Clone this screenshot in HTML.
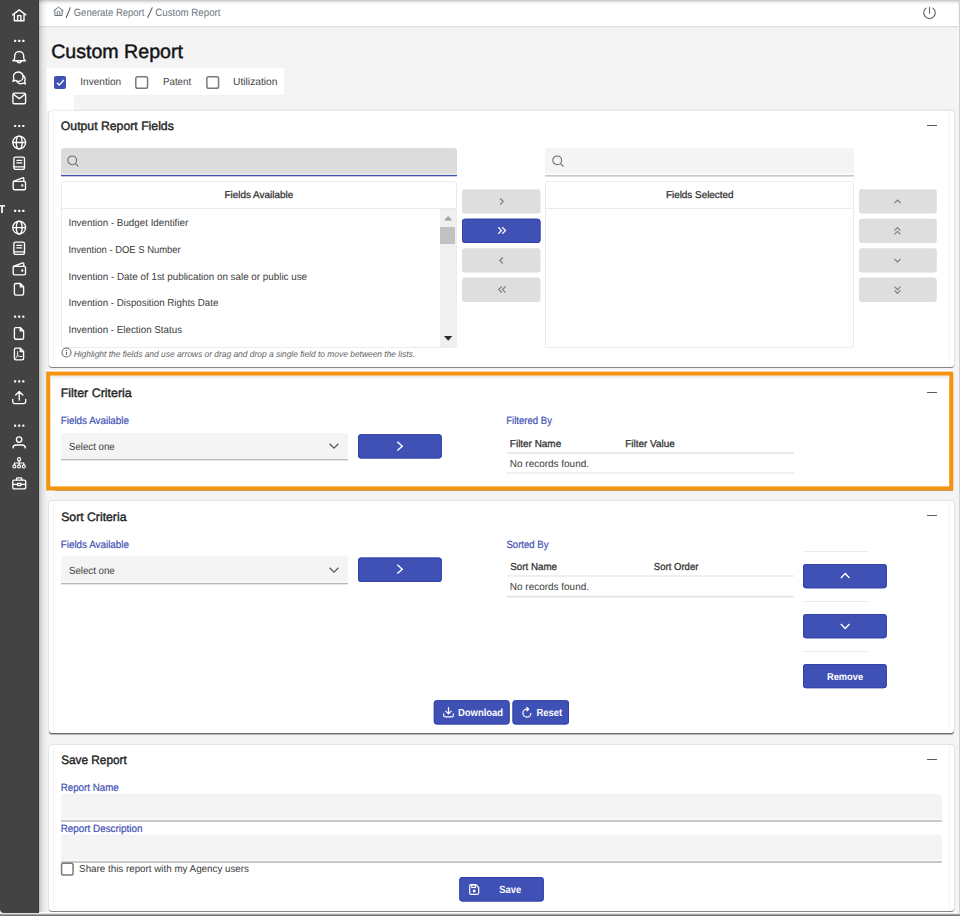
<!DOCTYPE html>
<html><head><meta charset="utf-8"><title>Custom Report</title>
<style>
*{box-sizing:border-box}
html,body{margin:0;padding:0}
body{width:960px;height:916px;overflow:hidden;position:relative;background:#f4f4f4;font-family:"Liberation Sans",sans-serif;}
.a{position:absolute}
.t{position:absolute;white-space:pre;line-height:1;transform-origin:0 0;text-rendering:geometricPrecision;font-family:"Liberation Sans",sans-serif;}
.panel{position:absolute;background:#fff;border-radius:3px;box-shadow:0 1px 0.5px rgba(0,0,0,.42),0 0 2px rgba(0,0,0,.24);}
.vl{position:absolute;width:1px;background:#f5f5f5}
.btn{position:absolute;border-radius:3px;background:#3f51b5;box-shadow:0 1px 1.5px rgba(0,0,0,.25)}
.btn.dis{background:#dedede;box-shadow:none}
.inp{position:absolute;background:#f4f4f4;border-radius:3px 3px 0 0;border-bottom:1px solid #9a9a9a}
.hl{position:absolute;height:1px;background:#e4e4e4}
.cb{position:absolute;width:13px;height:13px;border:1.5px solid #757575;border-radius:2px;background:#fff}
svg{position:absolute;overflow:visible}
.si{fill:none;stroke:#fff;stroke-width:1.35;stroke-linecap:round;stroke-linejoin:round}
.minus{position:absolute;height:1.15px;width:10px;background:#5c5c5c}

</style></head><body>
<!-- topbar -->
<div class="a" style="left:39px;top:0;width:919px;height:26.5px;background:#fff;border-bottom:1px solid #dedede"></div>
<div class="a" style="left:39px;top:27px;width:919px;height:2px;background:linear-gradient(#ebebeb,#f4f4f4)"></div>

<!-- checkbox strip -->
<div class="a" style="left:46.6px;top:68px;width:237.2px;height:26.8px;background:#fff"></div>
<div class="a" style="left:46.6px;top:94px;width:27.2px;height:17px;background:#fff"></div>
<div class="a" style="left:73.8px;top:94.8px;width:210px;height:1.7px;background:#f1f1f1"></div>
<div class="a" style="left:53.6px;top:76.1px;width:12.6px;height:12.6px;border-radius:2px;background:#3f51b5"></div>
<svg style="left:53.6px;top:76.1px" width="12.6" height="12.6" viewBox="0 0 12.6 12.6"><path d="M2.9 6.7 L5.2 9 L9.9 4" fill="none" stroke="#fff" stroke-width="1.3"/></svg>
<svg style="left:0;top:0" width="960" height="916"><rect x="135.8" y="76.8" width="11.75" height="11.50" rx="1.8" fill="#fff" stroke="#7a7a7a" stroke-width="1.5"/></svg>
<svg style="left:0;top:0" width="960" height="916"><rect x="206.85" y="76.8" width="11.70" height="11.50" rx="1.8" fill="#fff" stroke="#7a7a7a" stroke-width="1.5"/></svg>

<!-- PANEL 1 -->
<div class="panel" style="left:49px;top:111px;width:905px;height:255.5px"></div>
<div class="vl" style="left:53px;top:112px;height:253px"></div>
<div class="vl" style="left:949px;top:112px;height:253px"></div>
<div class="minus" style="left:927px;top:124.8px"></div>
<!-- search 1 -->
<div class="a" style="left:61px;top:148px;width:396px;height:28px;border-radius:3px 3px 0 0;background:linear-gradient(#dcdcdc 0,#dcdcdc 24.8px,#e6e6e2 24.8px,#e6e6e2 26.7px,#3f51b5 26.7px,#3f51b5 28px)"></div><div class="a" style="left:61px;top:176px;width:396px;height:1px;background:rgba(63,81,181,.3)"></div>
<svg style="left:67.1px;top:155.2px" width="12" height="12" viewBox="0 0 12 12"><circle cx="5.2" cy="5.3" r="4.4" fill="none" stroke="#6a6a6a" stroke-width="1.05"/><path d="M8.4 8.6 L11.1 11.2" stroke="#6a6a6a" stroke-width="1.15" stroke-linecap="round"/></svg>
<!-- list 1 -->
<div class="a" style="left:61px;top:181px;width:396px;height:167.4px;background:#fff;border:1px solid #ececec;border-radius:3px"></div>
<div class="hl" style="left:62px;top:208px;width:394px;background:#ebebeb"></div>
<!-- scrollbar -->
<div class="a" style="left:439.6px;top:209px;width:16.6px;height:138.4px;background:#f0f0f0;border-radius:0 0 2px 0"></div>
<div class="a" style="left:440.2px;top:226.8px;width:14.7px;height:17px;background:#c1c1c1"></div>
<svg style="left:443.6px;top:215.7px" width="8.4" height="4.6" viewBox="0 0 8.4 4.6"><path d="M0 4.6 L4.2 0 L8.4 4.6 Z" fill="#a0a0a0"/></svg>
<svg style="left:443.5px;top:336.2px" width="8.4" height="5" viewBox="0 0 8.4 5"><path d="M0 0 L4.2 4.8 L8.4 0 Z" fill="#2e2e2e"/></svg>
<!-- info icon -->
<svg style="left:60.5px;top:347.2px" width="11" height="11" viewBox="0 0 11 11"><circle cx="5.5" cy="5.5" r="4.55" fill="none" stroke="#6a6a6a" stroke-width="1.05"/><path d="M5.5 5 V7.9" stroke="#6a6a6a" stroke-width="1.1"/><circle cx="5.5" cy="3.4" r="0.65" fill="#6a6a6a"/></svg>
<!-- transfer buttons -->
<svg style="left:0;top:0" width="960" height="916"><rect x="462.0" y="189.2" width="78.5" height="24.3" rx="3" fill="#dedede"/></svg>
<svg style="left:0;top:0" width="960" height="916"><rect x="462.0" y="218.7" width="78.5" height="24.3" rx="3" fill="#3f51b5"/><rect x="462.5" y="219.2" width="77.5" height="23.3" rx="2.5" fill="none" stroke="#3342ab" stroke-width="1"/></svg>
<svg style="left:0;top:0" width="960" height="916"><rect x="462.0" y="248.2" width="78.5" height="24.3" rx="3" fill="#dedede"/></svg>
<svg style="left:0;top:0" width="960" height="916"><rect x="462.0" y="277.6" width="78.5" height="24.3" rx="3" fill="#dedede"/></svg>
<svg style="left:497px;top:197px" width="9" height="9" viewBox="0 0 9 9"><path d="M3.2 1.5 L6.2 4.5 L3.2 7.5" fill="none" stroke="#7f7f7f" stroke-width="1.2"/></svg>
<svg style="left:496.5px;top:226.3px" width="10" height="9" viewBox="0 0 10 9"><path d="M1.3 1.3 L4.5 4.5 L1.3 7.7 M5.3 1.3 L8.5 4.5 L5.3 7.7" fill="none" stroke="#fff" stroke-width="1.25"/></svg>
<svg style="left:497px;top:255.8px" width="9" height="9" viewBox="0 0 9 9"><path d="M5.8 1.5 L2.8 4.5 L5.8 7.5" fill="none" stroke="#7f7f7f" stroke-width="1.2"/></svg>
<svg style="left:496.5px;top:285.3px" width="10" height="9" viewBox="0 0 10 9"><path d="M4.7 1.5 L1.7 4.5 L4.7 7.5 M8.5 1.5 L5.5 4.5 L8.5 7.5" fill="none" stroke="#7f7f7f" stroke-width="1.2"/></svg>
<!-- search 2 -->
<div class="a" style="left:545px;top:148px;width:309px;height:29px;border-radius:3px 3px 0 0;background:linear-gradient(#f4f4f4 0,#f4f4f4 25.2px,#fbfbfb 25.2px,#fbfbfb 27px,#c8c8c8 27px,#c8c8c8 28px,#dedede 28px,#dedede 29px)"></div>
<svg style="left:552.2px;top:155.2px" width="12" height="12" viewBox="0 0 12 12"><circle cx="5.2" cy="5.3" r="4.4" fill="none" stroke="#6a6a6a" stroke-width="1.05"/><path d="M8.4 8.6 L11.1 11.2" stroke="#6a6a6a" stroke-width="1.15" stroke-linecap="round"/></svg>
<!-- list 2 -->
<div class="a" style="left:545px;top:181px;width:309px;height:167.4px;background:#fff;border:1px solid #ececec;border-radius:3px"></div>
<div class="hl" style="left:546px;top:208px;width:307px;background:#ebebeb"></div>
<!-- order buttons -->
<svg style="left:0;top:0" width="960" height="916"><rect x="859.0" y="189.2" width="77.8" height="24.3" rx="3" fill="#dedede"/></svg>
<svg style="left:0;top:0" width="960" height="916"><rect x="859.0" y="218.7" width="77.8" height="24.3" rx="3" fill="#dedede"/></svg>
<svg style="left:0;top:0" width="960" height="916"><rect x="859.0" y="248.2" width="77.8" height="24.3" rx="3" fill="#dedede"/></svg>
<svg style="left:0;top:0" width="960" height="916"><rect x="859.0" y="277.6" width="77.8" height="24.3" rx="3" fill="#dedede"/></svg>
<svg style="left:893.4px;top:197px" width="9" height="9" viewBox="0 0 9 9"><path d="M1.5 6 L4.5 3 L7.5 6" fill="none" stroke="#7f7f7f" stroke-width="1.2"/></svg>
<svg style="left:893.4px;top:226px" width="9" height="10" viewBox="0 0 9 10"><path d="M1.5 4.6 L4.5 1.6 L7.5 4.6 M1.5 8.4 L4.5 5.4 L7.5 8.4" fill="none" stroke="#7f7f7f" stroke-width="1.2"/></svg>
<svg style="left:893.4px;top:255.8px" width="9" height="9" viewBox="0 0 9 9"><path d="M1.5 3 L4.5 6 L7.5 3" fill="none" stroke="#7f7f7f" stroke-width="1.2"/></svg>
<svg style="left:893.4px;top:284.8px" width="9" height="10" viewBox="0 0 9 10"><path d="M1.5 1.6 L4.5 4.6 L7.5 1.6 M1.5 5.4 L4.5 8.4 L7.5 5.4" fill="none" stroke="#7f7f7f" stroke-width="1.2"/></svg>

<!-- PANEL 2 (highlighted) -->
<div class="a" style="left:55px;top:489.6px;width:898px;height:1.9px;background:rgba(90,105,130,.55)"></div>
<div class="a" style="left:46px;top:369.8px;width:907.5px;height:2px;background:#fbfefe"></div>
<svg style="left:0;top:360px" width="960" height="140" viewBox="0 360 960 140"><rect x="48.25" y="373.65" width="903" height="114.8" fill="#fff" stroke="#f5920e" stroke-width="4.1"/><rect x="50.3" y="375.7" width="898.9" height="2.7" fill="#ededf1"/></svg>
<div class="minus" style="left:927px;top:391.8px"></div>
<div class="a" style="left:61px;top:433px;width:287px;height:28px;border-radius:3px 3px 0 0;background:linear-gradient(#f4f4f4 0,#f4f4f4 25.3px,#fafafa 25.3px,#fafafa 26px,#b6b6b6 26px,#b6b6b6 27px,#e6e6e6 27px,#e6e6e6 28px)"></div>
<svg style="left:329px;top:443.3px" width="10" height="6.5" viewBox="0 0 10 6.5"><path d="M0.6 0.8 L5 5.1 L9.4 0.8" fill="none" stroke="#555" stroke-width="1.2"/></svg>
<svg style="left:0;top:0" width="960" height="916"><rect x="358.0" y="434.2" width="83.8" height="24.3" rx="3" fill="#3f51b5"/><rect x="358.5" y="434.7" width="82.8" height="23.3" rx="2.5" fill="none" stroke="#3342ab" stroke-width="1"/></svg>
<svg style="left:396.1px;top:441px" width="8" height="10.4" viewBox="0 0 8 10.4"><path d="M1.3 0.8 L6.3 5.2 L1.3 9.6" fill="none" stroke="#fff" stroke-width="1.4"/></svg>
<div class="hl" style="left:506.8px;top:452px;width:287px;height:2px;background:#e9e9e9"></div>
<div class="hl" style="left:506.8px;top:472px;width:287px;height:2px;background:#efefef"></div>

<!-- PANEL 3 -->
<div class="panel" style="left:49px;top:501.2px;width:905px;height:232.3px;box-shadow:0 1px 0 rgba(0,0,0,.38),0 2px 0.5px rgba(0,0,0,.24),0 0 2px rgba(0,0,0,.24)"></div>
<div class="vl" style="left:53px;top:502px;height:230px"></div>
<div class="vl" style="left:949px;top:502px;height:230px"></div>
<div class="minus" style="left:927px;top:515.2px"></div>
<div class="a" style="left:61px;top:556px;width:287px;height:29px;border-radius:3px 3px 0 0;background:linear-gradient(#f4f4f4 0,#f4f4f4 25.3px,#f9f9f9 25.3px,#f9f9f9 27px,#b6b6b6 27px,#b6b6b6 28px,#e6e6e6 28px,#e6e6e6 29px)"></div>
<svg style="left:329px;top:566.9px" width="10" height="6.5" viewBox="0 0 10 6.5"><path d="M0.6 0.8 L5 5.1 L9.4 0.8" fill="none" stroke="#555" stroke-width="1.2"/></svg>
<svg style="left:0;top:0" width="960" height="916"><rect x="358.0" y="557.6" width="83.8" height="24.3" rx="3" fill="#3f51b5"/><rect x="358.5" y="558.1" width="82.8" height="23.3" rx="2.5" fill="none" stroke="#3342ab" stroke-width="1"/></svg>
<svg style="left:396.1px;top:564.4px" width="8" height="10.4" viewBox="0 0 8 10.4"><path d="M1.3 0.8 L6.3 5.2 L1.3 9.6" fill="none" stroke="#fff" stroke-width="1.4"/></svg>
<div class="hl" style="left:506.8px;top:575px;width:287px;height:2px;background:#efefef"></div>
<div class="hl" style="left:506.8px;top:595px;width:287px;height:3px;background:linear-gradient(#f6f6f6 0,#f6f6f6 1px,#e6e6e6 1px,#e6e6e6 2px,#f0f0f0 2px)"></div>
<div class="hl" style="left:803px;top:550.6px;width:64.5px;background:#ececec"></div>
<div class="hl" style="left:803px;top:600.8px;width:64.5px;background:#ececec"></div>
<div class="hl" style="left:803px;top:650.8px;width:64.5px;background:#ececec"></div>
<svg style="left:0;top:0" width="960" height="916"><rect x="803.0" y="564.0" width="83.8" height="24.3" rx="3" fill="#3f51b5"/><rect x="803.5" y="564.5" width="82.8" height="23.3" rx="2.5" fill="none" stroke="#3342ab" stroke-width="1"/></svg>
<svg style="left:0;top:0" width="960" height="916"><rect x="803.0" y="614.0" width="83.8" height="24.3" rx="3" fill="#3f51b5"/><rect x="803.5" y="614.5" width="82.8" height="23.3" rx="2.5" fill="none" stroke="#3342ab" stroke-width="1"/></svg>
<svg style="left:0;top:0" width="960" height="916"><rect x="803.0" y="664.0" width="83.8" height="24.2" rx="3" fill="#3f51b5"/><rect x="803.5" y="664.5" width="82.8" height="23.2" rx="2.5" fill="none" stroke="#3342ab" stroke-width="1"/></svg>
<svg style="left:839.8px;top:572.4px" width="10.4" height="7" viewBox="0 0 10.4 7"><path d="M0.9 6 L5.2 1.4 L9.5 6" fill="none" stroke="#fff" stroke-width="1.4"/></svg>
<svg style="left:839.8px;top:622.6px" width="10.4" height="7" viewBox="0 0 10.4 7"><path d="M0.9 1 L5.2 5.6 L9.5 1" fill="none" stroke="#fff" stroke-width="1.4"/></svg>
<svg style="left:0;top:0" width="960" height="916"><rect x="433.8" y="700.2" width="75.8" height="24.3" rx="3" fill="#3f51b5"/><rect x="434.3" y="700.7" width="74.8" height="23.3" rx="2.5" fill="none" stroke="#3342ab" stroke-width="1"/></svg>
<svg style="left:0;top:0" width="960" height="916"><rect x="512.5" y="700.2" width="56.5" height="24.3" rx="3" fill="#3f51b5"/><rect x="513.0" y="700.7" width="55.5" height="23.3" rx="2.5" fill="none" stroke="#3342ab" stroke-width="1"/></svg>
<svg style="left:443px;top:707px" width="11" height="10.6" viewBox="0 0 11 10.6"><path d="M5.5 0.6 V6.6 M2.8 4.2 L5.5 6.9 L8.2 4.2 M0.7 6.8 V8.4 Q0.7 9.9 2.2 9.9 H8.8 Q10.3 9.9 10.3 8.4 V6.8" fill="none" stroke="#fff" stroke-width="1.2" stroke-linecap="round" stroke-linejoin="round"/></svg>
<svg style="left:522px;top:707px" width="10" height="10.6" viewBox="0 0 10 10.6"><path d="M8.9 6.3 A4 4 0 1 1 5 2.2 H6.5 M4.9 0.5 L6.7 2.2 L4.9 3.9" fill="none" stroke="#fff" stroke-width="1.2" stroke-linecap="round" stroke-linejoin="round"/></svg>

<!-- PANEL 4 -->
<div class="panel" style="left:49px;top:745px;width:905px;height:166.3px"></div>
<div class="vl" style="left:53px;top:746px;height:164px"></div>
<div class="vl" style="left:949px;top:746px;height:164px"></div>
<div class="minus" style="left:927px;top:758.6px"></div>
<div class="a" style="left:61px;top:794px;width:880.5px;height:28px;border-radius:3px 3px 0 0;background:linear-gradient(#fafafa 0,#fafafa .5px,#f4f4f4 .5px,#f4f4f4 24.8px,#fcfcfc 24.8px,#fcfcfc 26px,#c8c8c8 26px,#c8c8c8 28px)"></div>
<div class="a" style="left:61px;top:834px;width:880.5px;height:29px;border-radius:3px 3px 0 0;background:linear-gradient(#fafafa 0,#fafafa .6px,#f4f4f4 .6px,#f4f4f4 25.8px,#fcfcfc 25.8px,#fcfcfc 27px,#c8c8c8 27px,#c8c8c8 29px)"></div>
<svg style="left:0;top:0" width="960" height="916"><rect x="61.55" y="863.15" width="11.50" height="11.90" rx="1.8" fill="#fff" stroke="#7a7a7a" stroke-width="1.5"/></svg>
<svg style="left:0;top:0" width="960" height="916"><rect x="459.3" y="877.0" width="84.5" height="24.5" rx="3" fill="#3f51b5"/><rect x="459.8" y="877.5" width="83.5" height="23.5" rx="2.5" fill="none" stroke="#3342ab" stroke-width="1"/></svg>
<svg style="left:468.8px;top:883.6px" width="10.4" height="11" viewBox="0 0 10.4 11"><path d="M1.9 0.7 H6.9 L9.7 3.5 V9.1 Q9.7 10.3 8.5 10.3 H1.9 Q0.7 10.3 0.7 9.1 V1.9 Q0.7 0.7 1.9 0.7 Z" fill="none" stroke="#fff" stroke-width="1.2" stroke-linejoin="round"/><rect x="2.8" y="0.9" width="3.6" height="2.6" fill="none" stroke="#fff" stroke-width="1.1"/><circle cx="5.2" cy="7.1" r="1.5" fill="#fff"/></svg>

<!-- SIDEBAR -->
<div class="a" style="left:39px;top:0;width:7.5px;height:914px;background:linear-gradient(90deg,rgba(0,0,0,.22),rgba(0,0,0,.08) 40%,rgba(0,0,0,0))"></div>
<div class="a" style="left:0;top:0;width:39px;height:913px;background:#434343;border-radius:0 0 0 4px;border-right:1px solid #383838"></div>
<!--ICONS-START-->
<svg style="left:0;top:0" width="39" height="913" viewBox="0 0 39 913">
<g class="si">
<!-- home -->
<path d="M12.6 14.9 L19.2 9.9 L25.8 14.9 M14.3 13.8 V20.7 H24 V13.8 M17.6 20.7 V15.6 H20.9 V20.7"/>
<!-- bell -->
<path d="M12.9 60.7 H25.5 M13.2 60.5 Q14.7 59.6 14.7 57.6 V56 A4.5 4.5 0 0 1 23.7 56 V57.6 Q23.7 59.6 25.2 60.5 M17 61.2 A2.3 2.3 0 0 0 21.4 61.2"/>
<!-- comments -->
<path d="M18.2 72 A4.7 4.7 0 1 1 15.6 80.4 L12.9 81.3 L13.9 78.9 A4.7 4.7 0 0 1 18.2 72 Z"/>
<path d="M22.6 75.2 A4.4 4.4 0 0 1 24.6 81.3 L25.5 83.9 L22.8 83.1 A4.6 4.6 0 0 1 16.9 81.6"/>
<!-- envelope -->
<rect x="12.9" y="93.1" width="12.7" height="10.7" rx="1.6"/>
<path d="M13.4 94.3 L19.25 98.6 L25.1 94.3"/>
<!-- globe 1 -->
<g id="globe"><circle cx="19.2" cy="142.5" r="6.4"/><ellipse cx="19.2" cy="142.5" rx="2.9" ry="6.4"/><path d="M12.8 142.5 H25.6"/></g>
<!-- book 1 -->
<g id="book"><rect x="13.9" y="157.1" width="10.6" height="12.2" rx="1.5"/><path d="M14.2 166.9 H24.3 M16.9 160.4 H21.7 M16.9 162.9 H21.7"/></g>
<!-- wallet 1 -->
<g id="wallet"><rect x="13.2" y="181.3" width="12.3" height="8.4" rx="1.3"/><path d="M13.4 181.4 L22.6 177.8 Q23.7 177.5 23.8 178.7 V181.2"/><circle cx="22.3" cy="185.4" r="0.5" fill="#fff"/></g>
<g transform="translate(0,85.1)"><circle cx="19.2" cy="142.5" r="6.4"/><ellipse cx="19.2" cy="142.5" rx="2.9" ry="6.4"/><path d="M12.8 142.5 H25.6"/></g>
<g transform="translate(0,85)"><rect x="13.9" y="157.1" width="10.6" height="12.2" rx="1.5"/><path d="M14.2 166.9 H24.3 M16.9 160.4 H21.7 M16.9 162.9 H21.7"/></g>
<g transform="translate(0,85.1)"><rect x="13.2" y="181.3" width="12.3" height="8.4" rx="1.3"/><path d="M13.4 181.4 L22.6 177.8 Q23.7 177.5 23.8 178.7 V181.2"/><circle cx="22.3" cy="185.4" r="0.5" fill="#fff"/></g>
<!-- file -->
<g id="file"><path d="M20.3 283.5 H15.9 Q14.4 283.5 14.4 285 V293.6 Q14.4 295.1 15.9 295.1 H22.1 Q23.6 295.1 23.6 293.6 V286.8 Z M20.3 283.7 V286.8 H23.4"/></g>
<g transform="translate(0,44.1)"><path d="M20.3 283.5 H15.9 Q14.4 283.5 14.4 285 V293.6 Q14.4 295.1 15.9 295.1 H22.1 Q23.6 295.1 23.6 293.6 V286.8 Z M20.3 283.7 V286.8 H23.4"/></g>
<g transform="translate(0,64.7)"><path d="M20.3 283.5 H15.9 Q14.4 283.5 14.4 285 V293.6 Q14.4 295.1 15.9 295.1 H22.1 Q23.6 295.1 23.6 293.6 V286.8 Z M20.3 283.7 V286.8 H23.4"/></g>
<path d="M17.6 351.6 C17.6 356 17 357.5 15.6 358.2 M17.6 355 C19 356.6 20.2 356.9 22 356.4" stroke-width="1"/>
<!-- upload -->
<path d="M12.8 399.3 V401.8 Q12.8 403.6 14.6 403.6 H23.9 Q25.7 403.6 25.7 401.8 V399.3 M19.25 400 V391.8 M15.7 395.1 L19.25 391.6 L22.8 395.1"/>
<!-- user -->
<circle cx="19.1" cy="439.6" r="2.7"/>
<path d="M13 447.9 Q13 445 16.2 445 H22 Q25.3 445 25.3 447.9"/>
<!-- sitemap -->
<g stroke-width="1.15"><circle cx="19.1" cy="459.2" r="1.6"/><circle cx="14.4" cy="466.4" r="1.5"/><circle cx="19.1" cy="466.4" r="1.5"/><circle cx="23.8" cy="466.4" r="1.5"/>
<path d="M19.1 460.9 V464.8 M14.4 464.8 V463 H23.8 V464.8"/></g>
<!-- briefcase -->
<rect x="12.8" y="480.1" width="12.9" height="8.8" rx="1.5"/>
<path d="M16.6 479.9 V478.6 Q16.6 477.8 17.4 477.8 H21 Q21.8 477.8 21.8 478.6 V479.9 M13 484.4 H17.4 M21 484.4 H25.5 M17.6 483.4 H20.8 V485.6 H17.6 Z" />
</g>
<!-- dots -->
<g fill="#fff" id="dots"><rect x="14.1" y="39.8" width="2.1" height="2.1" rx=".5"/><rect x="18.2" y="39.8" width="2.1" height="2.1" rx=".5"/><rect x="22.3" y="39.8" width="2.1" height="2.1" rx=".5"/></g>
<g fill="#fff" transform="translate(0,85.2)"><rect x="14.1" y="39.8" width="2.1" height="2.1" rx=".5"/><rect x="18.2" y="39.8" width="2.1" height="2.1" rx=".5"/><rect x="22.3" y="39.8" width="2.1" height="2.1" rx=".5"/></g>
<g fill="#fff" transform="translate(0,170)"><rect x="14.1" y="39.8" width="2.1" height="2.1" rx=".5"/><rect x="18.2" y="39.8" width="2.1" height="2.1" rx=".5"/><rect x="22.3" y="39.8" width="2.1" height="2.1" rx=".5"/></g>
<g fill="#fff" transform="translate(0,275.8)"><rect x="14.1" y="39.8" width="2.1" height="2.1" rx=".5"/><rect x="18.2" y="39.8" width="2.1" height="2.1" rx=".5"/><rect x="22.3" y="39.8" width="2.1" height="2.1" rx=".5"/></g>
<g fill="#fff" transform="translate(0,340.5)"><rect x="14.1" y="39.8" width="2.1" height="2.1" rx=".5"/><rect x="18.2" y="39.8" width="2.1" height="2.1" rx=".5"/><rect x="22.3" y="39.8" width="2.1" height="2.1" rx=".5"/></g>
<g fill="#fff" transform="translate(0,384.8)"><rect x="14.1" y="39.8" width="2.1" height="2.1" rx=".5"/><rect x="18.2" y="39.8" width="2.1" height="2.1" rx=".5"/><rect x="22.3" y="39.8" width="2.1" height="2.1" rx=".5"/></g>
<!-- T -->
<path d="M-2 205.9 H5 M2 205.2 V213" stroke="#ececec" stroke-width="1.9" fill="none"/>
</svg>
<!-- breadcrumb home / slashes / power -->
<svg style="left:0;top:0" width="960" height="27" viewBox="0 0 960 27">
<g fill="none" stroke="#6c757d" stroke-width="1" stroke-linejoin="round" stroke-linecap="round">
<path d="M53.8 10.7 L58.5 7.1 L63.2 10.7 M54.9 10 V15.5 H62.1 V10 M57.2 15.5 V12.4 Q57.2 11.4 58.5 11.4 Q59.8 11.4 59.8 12.4 V15.5"/>
</g>
<g fill="none" stroke="#4d5359" stroke-width="1.05"><path d="M66.1 17.9 L70.4 7.4 M147.5 17.9 L152.4 7.4"/></g>
<g fill="none" stroke="#6b6b6b" stroke-width="1.15" stroke-linecap="round"><path d="M926 8.2 A5.8 5.8 0 1 0 933 8.2 M929.5 7.4 V13.2"/></g>
</svg>

<!--ICONS-END-->
<!-- frame -->
<div class="a" style="left:39px;top:0;width:921px;height:4.5px;background:linear-gradient(rgba(0,0,0,.23),rgba(0,0,0,.10) 35%,rgba(0,0,0,.02) 75%,rgba(0,0,0,0))"></div>
<div class="a" style="left:959px;top:0;width:1px;height:916px;background:#d1d1d1"></div>
<div class="a" style="left:0;top:913px;width:960px;height:3px;background:linear-gradient(#e2e2e2 0,#e2e2e2 1px,#a2a2a2 1px,#a2a2a2 2px,#747474 2px)"></div>
<div class="a" style="left:39px;top:912px;width:920px;height:1px;background:#fcfcfc"></div>

<!-- text -->
<span class="t" style="left:73px;top:8.33px;font-size:10.6px;font-weight:400;color:#6c757d;transform:translateX(0.75px) scaleX(0.8946);">Generate Report</span>
<span class="t" style="left:155px;top:8.33px;font-size:10.6px;font-weight:400;color:#6c757d;transform:translateX(0.24px) scaleX(0.9159);">Custom Report</span>
<span class="t" style="left:51px;top:42.58px;font-size:19.4px;font-weight:400;color:#141414;transform:translateX(0.14px) scaleX(1.0104);-webkit-text-stroke:0.45px #141414;">Custom Report</span>
<span class="t" style="left:80px;top:78.48px;font-size:10.3px;font-weight:400;color:#454545;transform:translateX(0.32px) scaleX(0.9764);">Invention</span>
<span class="t" style="left:162px;top:78.48px;font-size:10.3px;font-weight:400;color:#454545;transform:translateX(0.99px) scaleX(0.9448);">Patent</span>
<span class="t" style="left:233px;top:78.48px;font-size:10.3px;font-weight:400;color:#454545;transform:translateX(0.05px) scaleX(0.9965);">Utilization</span>
<span class="t" style="left:60px;top:119.57px;font-size:12.2px;font-weight:400;color:#222;transform:translateX(0.80px) scaleX(1.0049);-webkit-text-stroke:0.38px #222;">Output Report Fields</span>
<span class="t" style="left:60px;top:387.47px;font-size:12.2px;font-weight:400;color:#222;transform:translateX(0.64px) scaleX(1.0195);-webkit-text-stroke:0.38px #222;">Filter Criteria</span>
<span class="t" style="left:61px;top:511.47px;font-size:12.2px;font-weight:400;color:#222;transform:translateX(0.15px) scaleX(1.0046);-webkit-text-stroke:0.38px #222;">Sort Criteria</span>
<span class="t" style="left:61px;top:753.97px;font-size:12.2px;font-weight:400;color:#222;transform:translateX(0.16px) scaleX(0.9683);-webkit-text-stroke:0.38px #222;">Save Report</span>
<span class="t" style="left:224px;top:190.52px;font-size:9.9px;font-weight:400;color:#333;transform:translateX(0.45px) scaleX(1.0044);-webkit-text-stroke:0.28px #333;">Fields Available</span>
<span class="t" style="left:665px;top:190.52px;font-size:9.9px;font-weight:400;color:#333;transform:translateX(0.95px) scaleX(1.0008);-webkit-text-stroke:0.28px #333;">Fields Selected</span>
<span class="t" style="left:68px;top:219.45px;font-size:10.1px;font-weight:400;color:#3c3c3c;transform:translateX(0.43px) scaleX(0.9701);">Invention - Budget Identifier</span>
<span class="t" style="left:68px;top:246.25px;font-size:10.1px;font-weight:400;color:#3c3c3c;transform:translateX(0.46px) scaleX(0.9353);">Invention - DOE S Number</span>
<span class="t" style="left:68px;top:273.05px;font-size:10.1px;font-weight:400;color:#3c3c3c;transform:translateX(0.43px) scaleX(0.9731);">Invention - Date of 1st publication on sale or public use</span>
<span class="t" style="left:68px;top:298.85px;font-size:10.1px;font-weight:400;color:#3c3c3c;transform:translateX(0.43px) scaleX(0.9681);">Invention - Disposition Rights Date</span>
<span class="t" style="left:68px;top:325.75px;font-size:10.1px;font-weight:400;color:#3c3c3c;transform:translateX(0.43px) scaleX(0.9690);">Invention - Election Status</span>
<span class="t" style="left:73px;top:349.55px;font-size:8.8px;font-weight:400;color:#626262;transform:translateX(0.66px) scaleX(0.9553);font-style:italic;">Highlight the fields and use arrows or drag and drop a single field to move between the lists.</span>
<span class="t" style="left:60px;top:416.41px;font-size:10.5px;font-weight:400;color:#3f51b5;transform:translateX(0.70px) scaleX(0.9380);-webkit-text-stroke:0.2px #3f51b5;">Fields Available</span>
<span class="t" style="left:68px;top:443.20px;font-size:10.4px;font-weight:400;color:#3c3c3c;transform:translateX(0.93px) scaleX(0.9326);">Select one</span>
<span class="t" style="left:506px;top:416.41px;font-size:10.5px;font-weight:400;color:#3f51b5;transform:translateX(0.22px) scaleX(0.9111);-webkit-text-stroke:0.2px #3f51b5;">Filtered By</span>
<span class="t" style="left:509px;top:440.25px;font-size:10.1px;font-weight:400;color:#333;transform:translateX(0.86px) scaleX(0.9834);-webkit-text-stroke:0.28px #333;">Filter Name</span>
<span class="t" style="left:625px;top:440.25px;font-size:10.1px;font-weight:400;color:#333;transform:translateX(0.16px) scaleX(0.9848);-webkit-text-stroke:0.28px #333;">Filter Value</span>
<span class="t" style="left:509px;top:460.17px;font-size:10.2px;font-weight:400;color:#3c3c3c;transform:translateX(0.87px) scaleX(0.9767);">No records found.</span>
<span class="t" style="left:60px;top:540.31px;font-size:10.5px;font-weight:400;color:#3f51b5;transform:translateX(0.70px) scaleX(0.9380);-webkit-text-stroke:0.2px #3f51b5;">Fields Available</span>
<span class="t" style="left:68px;top:567.00px;font-size:10.4px;font-weight:400;color:#3c3c3c;transform:translateX(0.93px) scaleX(0.9326);">Select one</span>
<span class="t" style="left:506px;top:540.21px;font-size:10.5px;font-weight:400;color:#3f51b5;transform:translateX(0.44px) scaleX(0.9137);-webkit-text-stroke:0.2px #3f51b5;">Sorted By</span>
<span class="t" style="left:510px;top:562.95px;font-size:10.1px;font-weight:400;color:#333;transform:translateX(0.36px) scaleX(0.9654);-webkit-text-stroke:0.28px #333;">Sort Name</span>
<span class="t" style="left:653px;top:562.95px;font-size:10.1px;font-weight:400;color:#333;transform:translateX(0.86px) scaleX(0.9447);-webkit-text-stroke:0.28px #333;">Sort Order</span>
<span class="t" style="left:509px;top:582.87px;font-size:10.2px;font-weight:400;color:#3c3c3c;transform:translateX(0.87px) scaleX(0.9767);">No records found.</span>
<span class="t" style="left:826px;top:673.13px;font-size:10px;font-weight:700;color:#fff;transform:translateX(0.90px) scaleX(0.9316);">Remove</span>
<span class="t" style="left:457px;top:709.08px;font-size:10.3px;font-weight:700;color:#fff;transform:translateX(0.91px) scaleX(0.9194);">Download</span>
<span class="t" style="left:536px;top:709.08px;font-size:10.3px;font-weight:700;color:#fff;transform:translateX(0.41px) scaleX(0.9138);">Reset</span>
<span class="t" style="left:60px;top:783.41px;font-size:10.5px;font-weight:400;color:#3f51b5;transform:translateX(0.70px) scaleX(0.9285);-webkit-text-stroke:0.2px #3f51b5;">Report Name</span>
<span class="t" style="left:60px;top:823.61px;font-size:10.5px;font-weight:400;color:#3f51b5;transform:translateX(0.70px) scaleX(0.9399);-webkit-text-stroke:0.2px #3f51b5;">Report Description</span>
<span class="t" style="left:79px;top:864.95px;font-size:10.1px;font-weight:400;color:#3c3c3c;transform:translateX(0.11px) scaleX(0.9704);">Share this report with my Agency users</span>
<span class="t" style="left:499px;top:886.28px;font-size:10.3px;font-weight:700;color:#fff;transform:translateX(0.37px) scaleX(0.9106);">Save</span>
</body></html>
